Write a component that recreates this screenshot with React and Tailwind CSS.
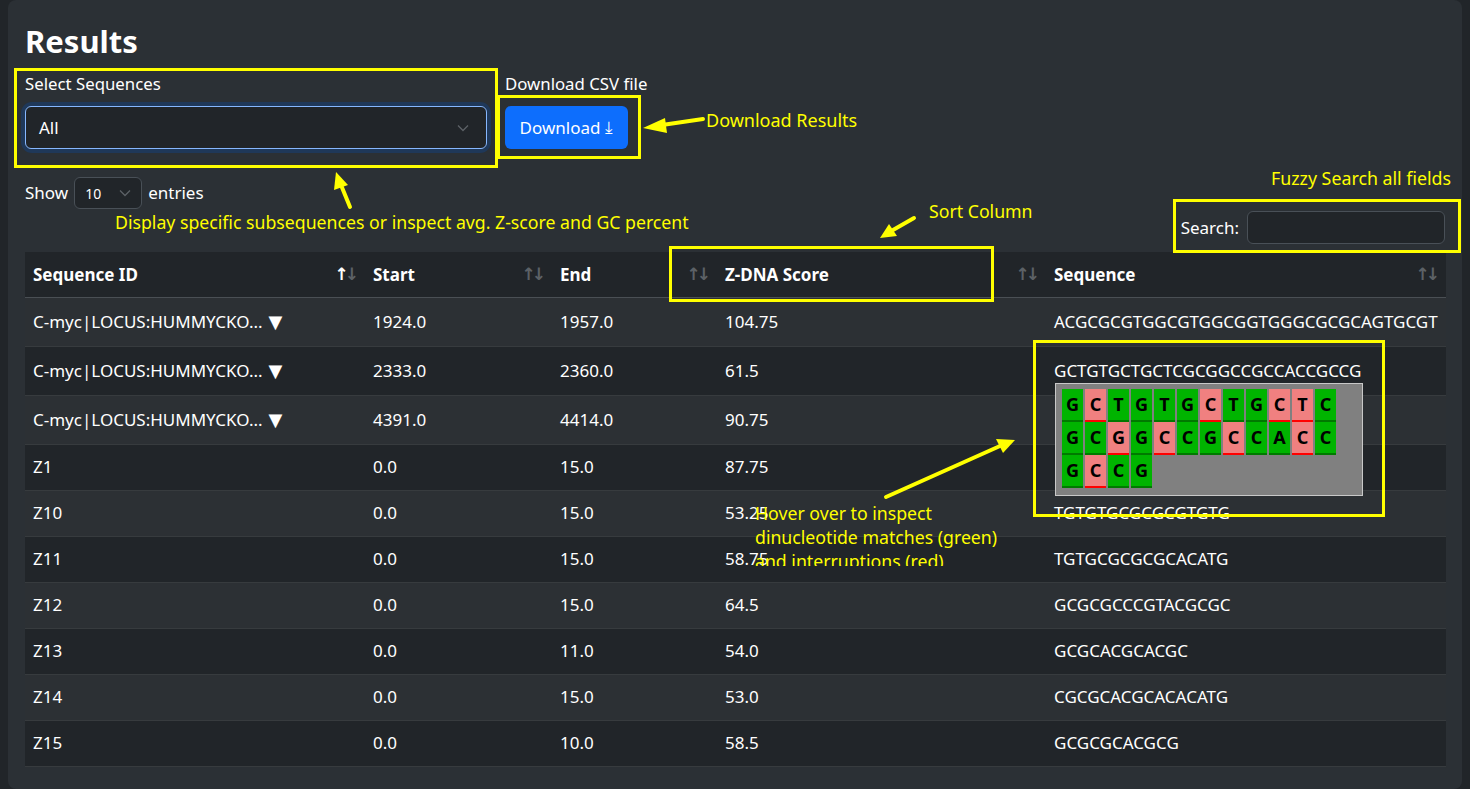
import React from 'react';

const rows = [
  { id: 'C-myc|LOCUS:HUMMYCKO...', more: true, start: '1924.0', end: '1957.0', score: '104.75', seq: 'ACGCGCGTGGCGTGGCGGTGGGCGCGCAGTGCGT' },
  { id: 'C-myc|LOCUS:HUMMYCKO...', more: true, start: '2333.0', end: '2360.0', score: '61.5', seq: 'GCTGTGCTGCTCGCGGCCGCCACCGCCG' },
  { id: 'C-myc|LOCUS:HUMMYCKO...', more: true, start: '4391.0', end: '4414.0', score: '90.75', seq: '' },
  { id: 'Z1', start: '0.0', end: '15.0', score: '87.75', seq: '' },
  { id: 'Z10', start: '0.0', end: '15.0', score: '53.25', seq: 'TGTGTGCGCGCGTGTG' },
  { id: 'Z11', start: '0.0', end: '15.0', score: '58.75', seq: 'TGTGCGCGCGCACATG' },
  { id: 'Z12', start: '0.0', end: '15.0', score: '64.5', seq: 'GCGCGCCCGTACGCGC' },
  { id: 'Z13', start: '0.0', end: '11.0', score: '54.0', seq: 'GCGCACGCACGC' },
  { id: 'Z14', start: '0.0', end: '15.0', score: '53.0', seq: 'CGCGCACGCACACATG' },
  { id: 'Z15', start: '0.0', end: '10.0', score: '58.5', seq: 'GCGCGCACGCG' },
];

// 1 = match (green), 0 = interruption (red)
const tileRows = [
  [['G', 1], ['C', 0], ['T', 1], ['G', 1], ['T', 1], ['G', 1], ['C', 0], ['T', 1], ['G', 1], ['C', 0], ['T', 0], ['C', 1]],
  [['G', 1], ['C', 1], ['G', 0], ['G', 1], ['C', 0], ['C', 1], ['G', 1], ['C', 0], ['C', 1], ['A', 1], ['C', 0], ['C', 1]],
  [['G', 1], ['C', 0], ['C', 1], ['G', 1]],
];

const SortIcon = ({ active }) => (
  <span className="flex items-center text-[17px] leading-none" style={{ fontFamily: '"DejaVu Sans", sans-serif' }}>
    <span className={active ? 'text-white' : 'text-[#5c6166]'}>↑</span>
    <span className="text-[#5c6166] -ml-[4px]">↓</span>
  </span>
);

const Chevron = () => (
  <svg width="12" height="8" viewBox="0 0 12 8" fill="none">
    <path d="M1 1.5l5 5 5-5" stroke="#5c6166" strokeWidth="1.3" />
  </svg>
);

const Head = ({ children, active }) => (
  <th className="h-[45px] pl-2 pr-[10px] text-left font-bold text-white border-b border-[#4a4f54]">
    <div className="flex items-center justify-between -mr-[4px]">
      <span>{children}</span>
      <SortIcon active={active} />
    </div>
  </th>
);

const App = () => {
  return (
    <div
      className="relative min-h-[789px] bg-[#212529] overflow-hidden text-[17px] text-[#dee2e6]"
      style={{ fontFamily: '"Noto Sans", "Open Sans", sans-serif' }}
    >
      <div className="mx-2 min-h-[789px] rounded-lg bg-[#2b3035] px-[17px] pt-[21px]">
        <h2 className="text-[31px] font-bold leading-[40px] text-white">Results</h2>

        <div className="flex mt-[11px]">
          <div className="w-[462px]">
            <div className="h-[24px] leading-[24px] text-[16.8px] text-white">Select Sequences</div>
            <div className="mt-[10px] rounded-[7px] ring-4 ring-[#1f3859]">
              <div className="flex h-[43px] items-center justify-between rounded-[6px] border border-[#86b7fe] bg-[#212529] pl-[13px] pr-[17px] text-white">
                <span>All</span>
                <Chevron />
              </div>
            </div>
          </div>
          <div className="ml-[18px]">
            <div className="h-[24px] leading-[24px] text-[16.8px] text-white">Download CSV file</div>
            <button className="mt-[10px] flex h-[43px] w-[123px] items-center justify-center rounded-[6px] bg-[#0d6efd] text-white">
              Download <span className="ml-[5px] text-[17px]" style={{ fontFamily: '"DejaVu Sans", sans-serif' }}>⤓</span>
            </button>
          </div>
        </div>

        <div className="mt-[28px] flex items-start justify-between">
          <div className="flex items-center gap-[6px] text-white">
            <span>Show</span>
            <div className="flex h-[32px] w-[68px] items-center justify-between rounded-[6px] border border-[#495057] bg-[#212529] pl-[10px] pr-[10px] text-[14px]">
              <span>10</span>
              <Chevron />
            </div>
            <span>entries</span>
          </div>
          <div className="mt-[34px] flex items-center gap-[8px] text-white">
            <span>Search:</span>
            <div className="h-[33px] w-[198px] rounded-[6px] border border-[#495057] bg-[#212529]" />
          </div>
        </div>

        <table className="mt-[8px] w-[1421px] border-collapse table-fixed">
          <colgroup>
            <col className="w-[340px]" />
            <col className="w-[187px]" />
            <col className="w-[165px]" />
            <col className="w-[329px]" />
            <col className="w-[400px]" />
          </colgroup>
          <thead className="bg-[#212529]">
            <tr>
              <Head active>Sequence ID</Head>
              <Head>Start</Head>
              <Head>End</Head>
              <Head>Z-DNA Score</Head>
              <Head>Sequence</Head>
            </tr>
          </thead>
          <tbody>
            {rows.map((r, i) => (
              <tr
                key={i}
                className={`${i % 2 === 0 ? 'bg-[#2c3034]' : 'bg-[#212529]'} ${r.more ? 'h-[49px]' : 'h-[46px]'} border-b border-[#373b3e] text-white`}
              >
                <td className="px-2 whitespace-nowrap">
                  {r.id}
                  {r.more && <span className="ml-[6px] text-[18px]" style={{ fontFamily: '"DejaVu Sans", sans-serif' }}>▼</span>}
                </td>
                <td className="px-2">{r.start}</td>
                <td className="px-2">{r.end}</td>
                <td className="px-2">{r.score}</td>
                <td className="px-2 whitespace-nowrap overflow-hidden">{r.seq}</td>
              </tr>
            ))}
          </tbody>
        </table>
      </div>

      {/* hover popup */}
      <div className="absolute left-[1055px] top-[383px] h-[113px] w-[308px] border border-[#c8c8c8] bg-[#808080] pl-[6px] pt-[5px]">
        {tileRows.map((row, ri) => (
          <div key={ri} className="flex">
            {row.map(([ch, ok], ti) => (
              <div
                key={ti}
                className={`mr-[2px] flex h-[33px] w-[21px] items-center justify-center border-b-2 text-[18px] font-bold text-black ${ok ? 'bg-[#00b400] border-[#007a00]' : 'bg-[#f08080] border-[#ff0000]'}`}
              >
                {ch}
              </div>
            ))}
          </div>
        ))}
      </div>

      {/* annotations */}
      <div className="absolute left-[14px] top-[68px] h-[100px] w-[484px] border-[3px] border-[#ffff00]" />
      <div className="absolute left-[497px] top-[95px] h-[64px] w-[144px] border-[3px] border-[#ffff00]" />
      <div className="absolute left-[669px] top-[246px] h-[56px] w-[325px] border-[3px] border-[#ffff00]" />
      <div className="absolute left-[1173px] top-[199px] h-[54px] w-[288px] border-[3px] border-[#ffff00]" />
      <div className="absolute left-[1033px] top-[340px] h-[177px] w-[352px] border-[3px] border-[#ffff00]" />

      <div className="absolute left-[706px] top-[108px] text-[18px] leading-[24px] text-[#ffff00]">Download Results</div>
      <div className="absolute left-[115px] top-[210px] text-[17.7px] leading-[24px] text-[#ffff00]">
        Display specific subsequences or inspect avg. Z-score and GC percent
      </div>
      <div className="absolute left-[929px] top-[199px] text-[17.7px] leading-[24px] text-[#ffff00]">Sort Column</div>
      <div className="absolute left-[1271px] top-[166px] text-[17.8px] leading-[24px] text-[#ffff00]">Fuzzy Search all fields</div>
      <div className="absolute left-[755px] top-[501px] h-[65px] overflow-hidden text-[17.7px] leading-[24px] text-[#ffff00]">
        <div>Hover over to inspect</div>
        <div>dinucleotide matches (green)</div>
        <div>and interruptions (red)</div>
      </div>

      <svg className="pointer-events-none absolute left-0 top-0" width="1470" height="789">
        <g stroke="#ffff00" strokeWidth="4" fill="#ffff00" strokeLinecap="round">
          <line x1="703" y1="119" x2="662" y2="125" />
          <polygon points="643,128 665,118 667,133" stroke="none" />
          <line x1="350" y1="207" x2="341" y2="185" />
          <polygon points="336,172 334,190 348,185" stroke="none" />
          <line x1="914" y1="218" x2="893" y2="230" />
          <polygon points="880,238 889,224 897,236" stroke="none" />
          <line x1="886" y1="497" x2="1000" y2="446" />
          <polygon points="1015,440 996,439 1003,453" stroke="none" />
        </g>
      </svg>
    </div>
  );
};

export default App;
